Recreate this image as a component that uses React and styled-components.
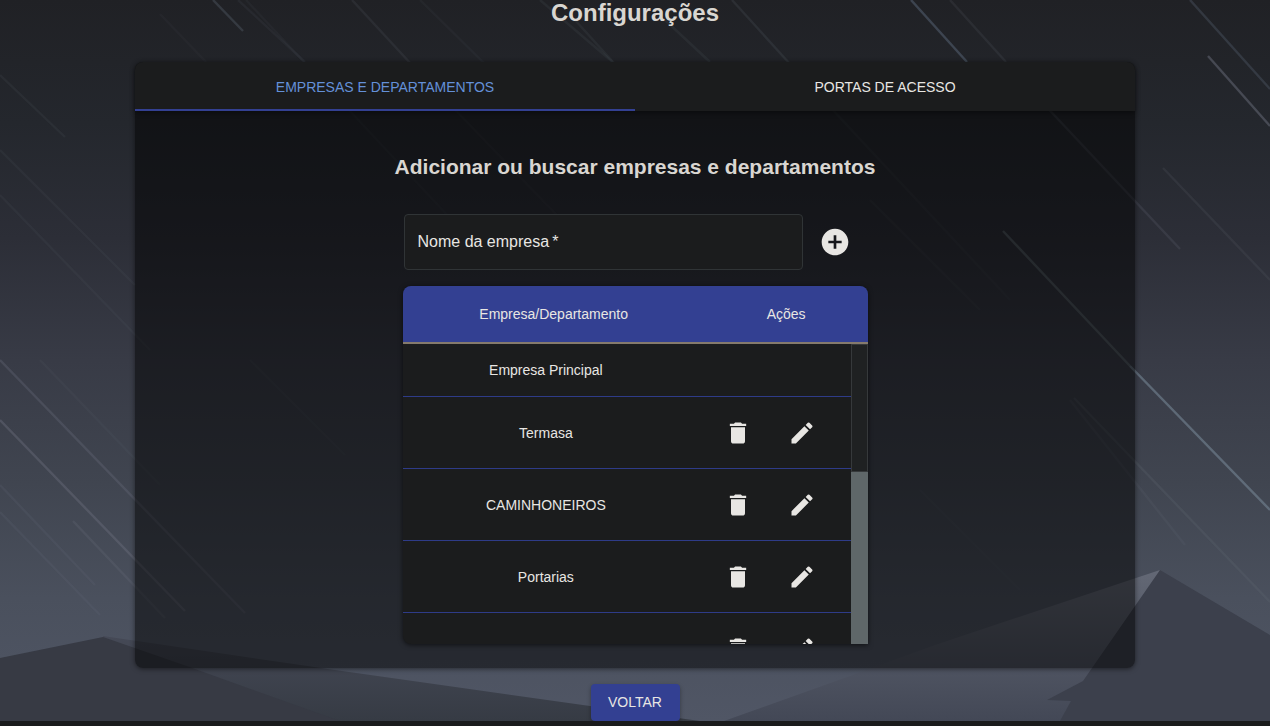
import React, { useState } from "react";
import styled, { createGlobalStyle } from "styled-components";
import { MdAddCircle, MdDelete, MdEdit } from "react-icons/md";

const GlobalStyle = createGlobalStyle`
  *, *::before, *::after { box-sizing: border-box; }
  body {
    margin: 0;
    background: #1a1b1c;
    color: #e8e6e3;
    font-family: "Liberation Sans", Arial, sans-serif;
    font-size: 14px;
  }
`;

const Page = styled.main`
  position: relative;
  display: flex;
  flex-direction: column;
  align-items: center;
  overflow: hidden;
`;

const Backdrop = styled.svg`
  position: absolute;
  inset: 0;
  z-index: -1;
  width: 100%;
  height: 100%;
`;

const Title = styled.h1`
  margin: 0 0 36px;
  color: #d9d6d1;
  font-size: 24px;
  line-height: 26px;
  font-weight: 700;
`;

const Card = styled.section`
  width: 100%;
  max-width: 1000px;
  border-radius: 8px;
  background: rgba(0, 0, 0, 0.5);
  box-shadow: 0 1px 5px rgba(0, 0, 0, 0.5);
`;

const TabBar = styled.div`
  display: flex;
  border-radius: 8px 8px 0 0;
  background: #1b1c1d;
  box-shadow: 0 2px 5px rgba(0, 0, 0, 0.4);
`;

const Tab = styled.button`
  flex: 1;
  height: 49px;
  padding: 2px 12px 0;
  border: 0;
  border-bottom: 2px solid ${(p) => (p.$active ? "#334092" : "transparent")};
  background: transparent;
  color: ${(p) => (p.$active ? "#6490d8" : "#e8e6e3")};
  font: inherit;
  text-transform: uppercase;
  cursor: pointer;
`;

const CardBody = styled.div`
  display: flex;
  flex-direction: column;
  align-items: center;
  padding: 40px 16px 24px;
`;

const Subtitle = styled.h2`
  margin: 0 0 32px;
  color: #d9d6d1;
  font-size: 21px;
  line-height: 31px;
  font-weight: 700;
`;

const AddForm = styled.form`
  display: flex;
  align-items: center;
  gap: 4px;
  width: 100%;
  max-width: 465px;
  margin-bottom: 16px;
  padding: 0 5px 0 1px;
`;

const Field = styled.div`
  position: relative;
  flex: 1;
`;

const FieldLabel = styled.label`
  position: absolute;
  top: 16px;
  left: 14px;
  font-size: 16px;
  line-height: 23px;
  pointer-events: none;
`;

const FieldInput = styled.input`
  display: block;
  width: 100%;
  height: 56px;
  padding: 0 14px;
  border: 1px solid #303436;
  border-radius: 4px;
  background: #1b1c1d;
  color: inherit;
  font: inherit;
  font-size: 16px;
`;

const IconButton = styled.button`
  display: flex;
  align-items: center;
  justify-content: center;
  width: ${(p) => p.$size}px;
  height: ${(p) => p.$size}px;
  padding: 0;
  border: 0;
  border-radius: 50%;
  background: transparent;
  color: #e8e6e3;
  cursor: pointer;
`;

const TablePanel = styled.div`
  width: 100%;
  max-width: 465px;
  border-radius: 8px 8px 0 8px;
  background: #1b1c1d;
  box-shadow: 0 1px 5px rgba(0, 0, 0, 0.6);
  overflow: hidden;
`;

const Table = styled.table`
  width: 100%;
  table-layout: fixed;
  border-collapse: separate;
  border-spacing: 0;
`;

const HeadCell = styled.th`
  width: ${(p) => p.$width};
  height: 58px;
  padding: 0;
  border-bottom: 2px solid #857a6c;
  background: #334092;
  font-weight: 400;
  text-align: center;
`;

const TableBody = styled.div`
  display: flex;
  height: 300px;
`;

const Scroller = styled.div`
  flex: 1;
  overflow-y: auto;
  scrollbar-width: none;
`;

const ScrollTrack = styled.div`
  width: 17px;
  background: #5f6769;
`;

const ScrollThumb = styled.div`
  height: 128px;
  border: 1px solid #36393b;
  background: #1f2122;
`;

const Cell = styled.td`
  width: ${(p) => p.$width};
  height: ${(p) => (p.$compact ? 53 : 72)}px;
  padding: 0;
  border-bottom: 1px solid #2e3b88;
  text-align: center;
`;

const Actions = styled.div`
  display: flex;
  justify-content: center;
  gap: 24px;
`;

const BackButton = styled.button`
  min-width: 89px;
  height: 37px;
  margin-top: 16px;
  padding: 0 16px 2px;
  border: 0;
  border-radius: 4px;
  background: #334092;
  box-shadow: 0 2px 4px rgba(0, 0, 0, 0.35);
  color: #e8e6e3;
  font: inherit;
  text-transform: uppercase;
  cursor: pointer;
`;

const companies = [
  { name: "Empresa Principal", fixed: true },
  { name: "Termasa" },
  { name: "CAMINHONEIROS" },
  { name: "Portarias" },
  { name: "" },
];

const tabs = ["Empresas e departamentos", "Portas de acesso"];

/* x1, y1, x2, y2, colour, opacity */
const rain = [
  [213, 0, 243, 31, "#4a525b", 0.5],
  [238, 0, 305, 62, "#4a505a", 0.18],
  [246, 0, 480, 250, "#4a505a", 0.12],
  [160, 14, 206, 62, "#4a505a", 0.1],
  [352, 0, 412, 65, "#565c66", 0.2],
  [412, 65, 600, 260, "#565c66", 0.1],
  [0, 75, 65, 137, "#555b66", 0.15],
  [420, 0, 485, 64, "#4a505a", 0.12],
  [540, 0, 615, 64, "#50565f", 0.18],
  [575, 20, 613, 62, "#50565f", 0.18],
  [665, 20, 710, 62, "#50565f", 0.18],
  [732, 0, 790, 64, "#50565f", 0.25],
  [790, 64, 1010, 300, "#50565f", 0.14],
  [911, 0, 967, 62, "#505c6c", 0.6],
  [950, 0, 1006, 62, "#50565f", 0.22],
  [1040, 100, 1180, 249, "#555b66", 0.3],
  [1190, 0, 1270, 89, "#505a68", 0.4],
  [1208, 56, 1270, 126, "#656874", 0.55],
  [1163, 168, 1270, 280, "#555b66", 0.22],
  [1003, 231, 1130, 366, "#5f6a72", 0.6],
  [1130, 366, 1270, 510, "#748594", 0.6],
  [1070, 400, 1185, 545, "#666c78", 0.15],
  [1074, 398, 1270, 602, "#666c78", 0.22],
  [0, 150, 135, 285, "#5a606c", 0.12],
  [0, 195, 150, 350, "#5a606c", 0.12],
  [0, 360, 245, 613, "#6d7180", 0.3],
  [0, 420, 185, 611, "#6d7180", 0.4],
  [0, 485, 95, 585, "#666c7a", 0.18],
  [0, 512, 100, 615, "#666c7a", 0.18],
  [73, 521, 165, 618, "#6d7180", 0.22],
  [40, 360, 160, 485, "#666c7a", 0.1],
  [250, 360, 345, 455, "#666c7a", 0.1],
  [920, 490, 1020, 590, "#666c7a", 0.1],
  [870, 200, 980, 310, "#50565f", 0.15],
];

function NightSky() {
  return (
    <Backdrop viewBox="0 0 1270 721" preserveAspectRatio="none" aria-hidden="true">
      <defs>
        <linearGradient id="sky" x1="0" y1="0" x2="0" y2="1">
          <stop offset="0" stopColor="#202125" />
          <stop offset="0.17" stopColor="#24272d" />
          <stop offset="0.33" stopColor="#2c2e37" />
          <stop offset="0.5" stopColor="#383b46" />
          <stop offset="0.67" stopColor="#404550" />
          <stop offset="0.83" stopColor="#4a505d" />
          <stop offset="1" stopColor="#505665" />
        </linearGradient>
        <linearGradient id="ridge" x1="0" y1="0" x2="0" y2="1">
          <stop offset="0" stopColor="#454956" />
          <stop offset="1" stopColor="#363b44" />
        </linearGradient>
        <linearGradient id="slope" x1="0" y1="0" x2="0" y2="1">
          <stop offset="0" stopColor="#636875" />
          <stop offset="1" stopColor="#434856" />
        </linearGradient>
      </defs>
      <rect width="1270" height="721" fill="url(#sky)" />
      {rain.map(([x1, y1, x2, y2, color, opacity], i) => (
        <line key={i} x1={x1} y1={y1} x2={x2} y2={y2} stroke={color} strokeOpacity={opacity} strokeWidth="2.4" />
      ))}
      <path d="M103 636 335 670 420 682 590 706 700 721H103Z" fill="url(#ridge)" />
      <path d="M0 658 103 637 195 669 340 721H0Z" fill="#373a44" />
      <path d="M1160 570 935 645 850 676 724 721H1100Z" fill="url(#slope)" />
      <path d="M1160 570 1270 635V721H1060L1071 701 1047 700 1083 681Z" fill="#3c404c" />
    </Backdrop>
  );
}

export default function App() {
  const [activeTab, setActiveTab] = useState(0);
  const [company, setCompany] = useState("");

  return (
    <>
      <GlobalStyle />
      <Page>
        <NightSky />
        <Title>Configurações</Title>
        <Card>
          <TabBar role="tablist">
            {tabs.map((label, i) => (
              <Tab
                key={label}
                type="button"
                role="tab"
                aria-selected={activeTab === i}
                $active={activeTab === i}
                onClick={() => setActiveTab(i)}
              >
                {label}
              </Tab>
            ))}
          </TabBar>
          <CardBody>
            <Subtitle>Adicionar ou buscar empresas e departamentos</Subtitle>
            <AddForm onSubmit={(e) => e.preventDefault()}>
              <Field>
                <FieldInput
                  id="company"
                  required
                  value={company}
                  onChange={(e) => setCompany(e.target.value)}
                />
                <FieldLabel htmlFor="company" hidden={company !== ""}>
                  Nome da empresa&thinsp;*
                </FieldLabel>
              </Field>
              <IconButton type="submit" $size={56} aria-label="Adicionar">
                <MdAddCircle size={32} />
              </IconButton>
            </AddForm>
            <TablePanel>
              <Table>
                <thead>
                  <tr>
                    <HeadCell $width="65%">Empresa/Departamento</HeadCell>
                    <HeadCell $width="35%">Ações</HeadCell>
                  </tr>
                </thead>
              </Table>
              <TableBody>
                <Scroller>
                  <Table>
                    <tbody>
                      {companies.map(({ name, fixed }) => (
                        <tr key={name}>
                          <Cell $width="64%" $compact={fixed}>{name}</Cell>
                          <Cell $width="36%" $compact={fixed}>
                            {!fixed && (
                              <Actions>
                                <IconButton type="button" $size={40} aria-label="Excluir">
                                  <MdDelete size={28} />
                                </IconButton>
                                <IconButton type="button" $size={40} aria-label="Editar">
                                  <MdEdit size={28} />
                                </IconButton>
                              </Actions>
                            )}
                          </Cell>
                        </tr>
                      ))}
                    </tbody>
                  </Table>
                </Scroller>
                <ScrollTrack>
                  <ScrollThumb />
                </ScrollTrack>
              </TableBody>
            </TablePanel>
          </CardBody>
        </Card>
        <BackButton type="button">Voltar</BackButton>
      </Page>
    </>
  );
}
